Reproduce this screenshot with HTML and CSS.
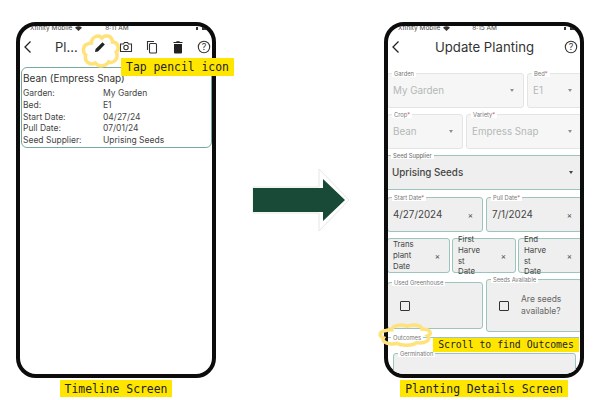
FILE: index.html
```html
<!DOCTYPE html>
<html lang="en">
<head>
  <meta charset="UTF-8" />
  <title>Planting walkthrough</title>
  <link rel="stylesheet" href="styles.css">
</head>
<body>
  <div class="stage">

    <!-- Timeline phone -->
    <div class="column">
      <div class="phone">
        <div class="screen">
          <div class="status">
            <span class="carrier">Xfinity Mobile</span>
            <svg class="wifi" viewBox="0 0 10 7"><path d="M0 2.500a7 7 0 0 1 10 0L5 7z" /></svg>
            <span class="clock clock-left">8:11 AM</span>
            <span class="signal"></span>
            <span class="battery"></span>
          </div>
          <div class="header">
            <svg class="back" viewBox="0 0 14 14"><path d="M9.500 1.500 4 7l5.500 5.500" /></svg>
            <span class="short-title">Pl...</span>
            <div class="actions">
              <svg class="icon" viewBox="0 0 14 14"><path class="solid" d="M2 12l.6-3L9.500 2.200 11.800 4.500 5 11.400z" /></svg>
              <svg class="icon" viewBox="0 0 14 14"><path class="line" d="M1.500 4h3l1-1.500h3L9.500 4h3v7.500h-11z" /><circle class="line" cx="7" cy="7.500" r="2.200" /></svg>
              <svg class="icon" viewBox="0 0 14 14"><path class="line" d="M2.500 10V1.500H9" /><rect class="line" x="4.500" y="3.500" width="7" height="9.500" rx="1" /></svg>
              <svg class="icon" viewBox="0 0 14 14"><path class="solid" d="M3 4h8v8.500a1 1 0 0 1-1 1H4a1 1 0 0 1-1-1zM2.500 2H5l.7-.7h2.600L9 2h2.500v1h-9z" /></svg>
              <svg class="icon" viewBox="0 0 14 14"><circle class="line" cx="7" cy="7" r="5.700" /><text class="help-mark" x="7" y="10">?</text></svg>
            </div>
          </div>
          <div class="card">
            <div class="card-title">Bean (Empress Snap)</div>
            <div class="card-row"><span>Garden:</span><span>My Garden</span></div>
            <div class="card-row"><span>Bed:</span><span>E1</span></div>
            <div class="card-row"><span>Start Date:</span><span>04/27/24</span></div>
            <div class="card-row"><span>Pull Date:</span><span>07/01/24</span></div>
            <div class="card-row"><span>Seed Supplier:</span><span>Uprising Seeds</span></div>
          </div>
        </div>
        <svg class="cloud cloud-pencil" viewBox="0 0 40 34" preserveAspectRatio="none"><path d="M10 10C10 4 17 1 21 5C25 1 32 3 32 9C38 9 40 16 36 19C39 25 34 31 28 29C25 34 17 34 14 30C8 33 2 28 4 22C0 19 1 12 6 11C7 10 9 10 10 10Z" /></svg>
        <div class="note note-tap">Tap pencil icon</div>
      </div>
      <div class="note caption">Timeline Screen</div>
    </div>

    <svg class="arrow" viewBox="0 0 100 64">
      <path class="arrow-edge" d="M3 19H69V1L99 32 69 63V45H3z" />
      <path class="arrow-body" d="M3 20H73V11L95 32 73 53V44H3z" />
    </svg>

    <!-- Planting details phone -->
    <div class="column">
      <div class="phone">
        <div class="screen">
          <div class="status">
            <span class="carrier">Xfinity Mobile</span>
            <svg class="wifi" viewBox="0 0 10 7"><path d="M0 2.500a7 7 0 0 1 10 0L5 7z" /></svg>
            <span class="clock clock-right">8:15 AM</span>
            <span class="signal"></span>
            <span class="battery"></span>
          </div>
          <div class="header header-center">
            <svg class="back" viewBox="0 0 14 14"><path d="M9.500 1.500 4 7l5.500 5.500" /></svg>
            <span class="page-title">Update Planting</span>
            <svg class="icon" viewBox="0 0 14 14"><circle class="line" cx="7" cy="7" r="5.700" /><text class="help-mark" x="7" y="10">?</text></svg>
          </div>

          <div class="form">
            <div class="row row-garden">
              <div class="field"><span class="field-label">Garden</span><span class="value">My Garden</span><span class="caret"></span></div>
              <div class="field"><span class="field-label">Bed<i>*</i></span><span class="value">E1</span><span class="caret"></span></div>
            </div>
            <div class="row row-crop">
              <div class="field"><span class="field-label">Crop<i>*</i></span><span class="value">Bean</span><span class="caret"></span></div>
              <div class="field"><span class="field-label">Variety<i>*</i></span><span class="value">Empress Snap</span><span class="caret"></span></div>
            </div>
            <div class="row row-one">
              <div class="field active supplier"><span class="field-label">Seed Supplier</span><span class="value">Uprising Seeds</span><span class="caret"></span></div>
            </div>
            <div class="row row-dates">
              <div class="field active"><span class="field-label">Start Date<i>*</i></span><span class="value">4/27/2024</span><span class="clear">×</span></div>
              <div class="field active"><span class="field-label">Pull Date<i>*</i></span><span class="value">7/1/2024</span><span class="clear">×</span></div>
            </div>
            <div class="row row-thirds">
              <div class="field active"><span class="value narrow">Trans plant Date</span><span class="clear">×</span></div>
              <div class="field active"><span class="value narrow">First Harve st Date</span><span class="clear">×</span></div>
              <div class="field active"><span class="value narrow">End Harve st Date</span><span class="clear">×</span></div>
            </div>
            <div class="row row-checks">
              <div class="field active check-low"><span class="field-label">Used Greenhouse</span><span class="checkbox"></span></div>
              <div class="field active check-tall"><span class="field-label">Seeds Available</span><span class="checkbox"></span><span class="check-text">Are seeds available?</span></div>
            </div>
            <div class="outcomes">
              <span class="field-label">Outcomes</span>
              <div class="field active germination"><span class="field-label">Germination</span></div>
            </div>
          </div>
        </div>
        <svg class="cloud cloud-outcomes" viewBox="0 0 40 34" preserveAspectRatio="none"><path d="M10 10C10 4 17 1 21 5C25 1 32 3 32 9C38 9 40 16 36 19C39 25 34 31 28 29C25 34 17 34 14 30C8 33 2 28 4 22C0 19 1 12 6 11C7 10 9 10 10 10Z" /></svg>
        <div class="note note-scroll">Scroll to find Outcomes</div>
      </div>
      <div class="note caption">Planting Details Screen</div>
    </div>

  </div>
</body>
</html>
```

FILE: styles.css
```css
body {
  margin: 0;
  background: #fff;
  font-family: Inter, "Liberation Sans", sans-serif;
  color: #333;
}
.stage {
  display: flex;
  justify-content: space-between;
  width: 600px;
  height: 400px;
  padding: 22px 16px 0;
  box-sizing: border-box;
  overflow: hidden;
}
.column {
  display: flex;
  flex-direction: column;
  align-items: center;
  width: 200px;
}
.phone {
  position: relative;
  width: 200px;
  height: 356px;
  box-sizing: border-box;
  border: 4px solid #0c0c0c;
  border-radius: 20px;
  background: #fff;
}
.screen {
  height: 100%;
  border-radius: 15px;
  overflow: hidden;
}

/* status bar, cut off by the phone frame */
.status {
  display: flex;
  align-items: center;
  height: 4px;
  font-size: 6.500px;
  line-height: 4px;
  color: #444;
  white-space: nowrap;
  margin-bottom: 2px;
}
.carrier { margin-left: 10px; }
.wifi { width: 7px; height: 5px; margin-left: 3px; fill: #333; }
.clock-left { margin-left: 23px; }
.clock-right { margin-left: 22px; }
.signal {
  width: 2px;
  height: 3px;
  margin-left: auto;
  background: #333;
}
.battery {
  width: 8px;
  height: 4px;
  margin-left: 4px;
  margin-right: 2px;
  background: #333;
}

/* headers */
.header {
  display: flex;
  align-items: center;
  height: 30px;
  padding: 0 1px 0 0;
}
.back {
  flex: none;
  width: 14px;
  height: 14px;
  margin-left: 1px;
  fill: none;
  stroke: #222;
  stroke-width: 1.300;
}
.short-title {
  margin-left: 20px;
  font-size: 13px;
  color: #333;
}
.actions {
  display: flex;
  gap: 12px;
  margin-left: auto;
}
.icon {
  flex: none;
  width: 14px;
  height: 14px;
}
.solid { fill: #222; }
.line { fill: none; stroke: #333; stroke-width: 1.100; }
.help-mark {
  font-size: 9px;
  fill: #333;
  text-anchor: middle;
}
.header-center { padding-right: 2px; }
.page-title {
  flex: 1;
  padding-left: 2px;
  text-align: center;
  font-size: 13.200px;
  color: #333;
}

/* timeline card */
.card {
  height: 81px;
  margin: 5px 0 0 1px;
  padding: 4px 1px 0;
  width: 191px;
  box-sizing: border-box;
  border: 1px solid #76aaa0;
  border-radius: 6px;
  font-size: 8.500px;
  color: #444;
}
.card-title {
  height: 12px;
  margin-bottom: 4px;
  font-size: 10px;
  line-height: 12px;
  color: #333;
}
.card-row {
  display: grid;
  grid-template-columns: 80px 1fr;
  line-height: 11.800px;
}

/* planting form */
.form {
  display: flex;
  flex-direction: column;
  gap: 6px;
  width: 195px;
  margin: 11px 0 0 -1px;
}
.row {
  display: grid;
  grid-auto-rows: 35px;
  gap: 3px;
}
.row-garden { grid-template-columns: 137px 55px; }
.row-crop { grid-template-columns: 76px 116px; }
.row-dates { grid-template-columns: 96px 96px; margin-top: 1px; }
.row-thirds { grid-template-columns: 63px 64px 64px; gap: 2px; }
.row-checks {
  grid-template-columns: 96px 96px;
  grid-auto-rows: 53px;
  align-items: center;
}
.field {
  position: relative;
  display: flex;
  align-items: center;
  height: 100%;
  box-sizing: border-box;
  padding: 0 6px 0 5px;
  border: 1px solid #dfe6e4;
  border-radius: 3px;
  background: #f6f6f6;
  font-size: 9.800px;
  color: #b4b8b7;
}
.field.active {
  border-color: #9cc4bd;
  background: #efefef;
  color: #444;
}
.field-label {
  position: absolute;
  top: -4px;
  left: 4px;
  padding: 0 2px;
  background: #fff;
  font-size: 5.800px;
  line-height: 7px;
  color: #777;
  white-space: nowrap;
}
.field-label i {
  font-style: normal;
  color: #d9534f;
}
.value { white-space: nowrap; }
.supplier {
  border-width: 1px 0;
  border-radius: 0;
  font-weight: 500;
  color: #333;
}
.caret {
  width: 0;
  height: 0;
  margin-left: auto;
  margin-right: 3px;
  border-top: 3px solid #8c9090;
  border-left: 2.500px solid transparent;
  border-right: 2.500px solid transparent;
}
.supplier .caret { border-top-color: #444; }
.clear {
  margin-left: auto;
  margin-right: 3px;
  font-size: 8px;
  color: #444;
}
.narrow {
  width: 23px;
  font-size: 7.800px;
  line-height: 10.700px;
  white-space: normal;
}
.check-low { height: 47px; }
.check-tall { height: 53px; }
.checkbox {
  flex: none;
  width: 8px;
  height: 8px;
  margin-left: 7px;
  border: 1px solid #333;
  border-radius: 1px;
}
.check-text {
  width: 48px;
  margin-left: 12px;
  font-size: 8.500px;
  line-height: 11.500px;
  color: #666;
}
.outcomes {
  position: relative;
  margin-top: -1px;
  padding: 15px 5px 0 6px;
  border-top: 1px solid #9cc4bd;
  width: 192px;
  box-sizing: border-box;
}
.germination {
  width: 183px;
  height: 40px;
}

/* overlay notes */
.note {
  background: #ffe600;
  font-family: "DejaVu Sans Mono", "Liberation Mono", monospace;
  font-size: 11.400px;
  line-height: 14px;
  color: #222;
  white-space: nowrap;
  text-align: center;
}
.caption {
  margin-top: 2px;
  padding: 2px 5px 1px;
}
.note-tap {
  position: absolute;
  top: 32px;
  left: 101px;
  width: 113px;
  height: 18px;
  line-height: 18px;
}
.note-scroll {
  position: absolute;
  top: 312px;
  left: 45px;
  width: 146px;
  font-size: 9.800px;
}
.cloud {
  position: absolute;
  fill: none;
  stroke: #ffe27a;
  stroke-width: 3.500;
  overflow: visible;
}
.cloud path { vector-effect: non-scaling-stroke; }
.cloud-pencil { top: 7px; left: 62px; width: 38px; height: 34px; }
.cloud-outcomes { top: 297px; left: -10px; width: 55px; height: 23px; }

/* middle arrow */
.arrow {
  flex: none;
  align-self: flex-start;
  width: 100px;
  height: 64px;
  margin-top: 146px;
}
.arrow-edge { fill: #fff; stroke: #e6e6e6; stroke-width: 1; }
.arrow-body { fill: #184a37; }
```
